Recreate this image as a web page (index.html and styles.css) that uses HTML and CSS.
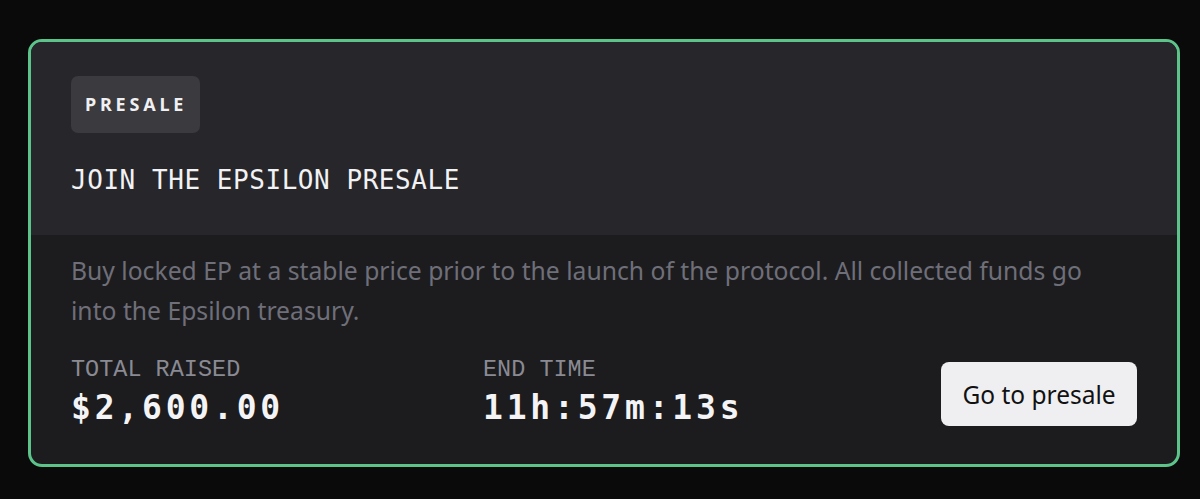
FILE: index.html
```html
<!DOCTYPE html>
<html>
<head>
<meta charset="utf-8">
<link rel="stylesheet" href="styles.css">
</head>
<body>
<div class="card">
  <div class="card-top">
    <div class="badge">PRESALE</div>
    <h1 class="title">JOIN THE EPSILON PRESALE</h1>
  </div>
  <div class="card-bottom">
    <p class="desc">Buy locked EP at a stable price prior to the launch of the protocol. All collected funds go into the Epsilon treasury.</p>
    <div class="stats">
      <div class="stat">
        <div class="stat-label">TOTAL RAISED</div>
        <div class="stat-value">$2,600.00</div>
      </div>
      <div class="stat">
        <div class="stat-label">END TIME</div>
        <div class="stat-value">11h:57m:13s</div>
      </div>
      <button class="btn">Go to presale</button>
    </div>
  </div>
</div>
</body>
</html>
```

FILE: styles.css
```css
html, body {
  margin: 0;
  padding: 0;
  background: #0a0a0a;
}
body {
  padding: 39px 20px 0 28px;
  font-family: "Noto Sans", "Open Sans", sans-serif;
}
.card {
  width: 1146px;
  height: 422px;
  border: 3px solid #5cc48b;
  border-radius: 14px;
  overflow: hidden;
  background: #1c1c1f;
  display: flex;
  flex-direction: column;
}
.card-top {
  flex-shrink: 0;
  background: #27272b;
  padding: 34px 40px 0 40px;
  height: 193px;
  box-sizing: border-box;
}
.badge {
  display: inline-block;
  background: #3a3a3f;
  color: #f0f0f2;
  font-family: "Noto Sans", sans-serif;
  font-weight: 700;
  font-size: 18px;
  letter-spacing: 3.8px;
  height: 57px;
  line-height: 57px;
  padding: 0 13px 0 14px;
  border-radius: 7px;
  box-sizing: border-box;
  vertical-align: top;
}
.title {
  margin: 31px 0 0 0;
  font-family: "DejaVu Sans Mono", monospace;
  font-weight: 400;
  font-size: 26px;
  line-height: 32px;
  color: #f2f2f4;
  letter-spacing: 0.55px;
}
.card-bottom {
  padding: 16px 40px 0 40px;
  flex: 1;
}
.desc {
  margin: 0;
  font-family: "Noto Sans", sans-serif;
  font-size: 24.7px;
  line-height: 40px;
  color: #6f6f79;
  max-width: 1050px;
}
.stats {
  display: flex;
  align-items: flex-start;
  margin-top: 25px;
}
.stat {
  width: 412px;
  display: flex;
  flex-direction: column;
  gap: 4px;
}
.stat-label {
  font-family: "Liberation Mono", monospace;
  font-size: 23.5px;
  line-height: 28px;
  color: #8a8a93;
}
.stat-value {
  font-family: "DejaVu Sans Mono", monospace;
  font-weight: 700;
  font-size: 33px;
  line-height: 40px;
  letter-spacing: 3.8px;
  color: #f4f4f6;
}
.btn {
  margin-left: auto;
  margin-top: 6px;
  width: 196px;
  height: 64px;
  border: none;
  border-radius: 8px;
  background: #efeff1;
  color: #111;
  font-family: "Noto Sans", sans-serif;
  font-size: 24.5px;
  padding: 0;
}
```
